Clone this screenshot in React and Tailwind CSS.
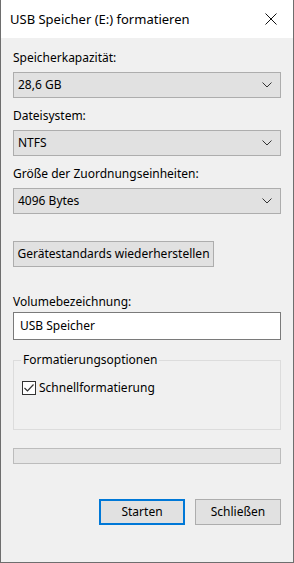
import React from "react";

function Chevron() {
  return (
    <svg width="10" height="6" viewBox="0 0 10 6" className="block">
      <path d="M0.5 0.5 L5 5 L9.5 0.5" fill="none" stroke="#333" strokeWidth="1" />
    </svg>
  );
}

function Combo({ value }) {
  return (
    <div className="h-[26px] border border-[#adadad] bg-[#e1e1e1] flex items-center justify-between pl-[4px] pr-[8px]">
      <span>{value}</span>
      <Chevron />
    </div>
  );
}

export default function App() {
  return (
    <div
      className="w-[294px] h-[563px] flex flex-col border-l border-r border-b border-[#6e6e6e] bg-[#f0f0f0] text-[12px] leading-[16px] text-black"
      style={{ fontFamily: '"Segoe UI", "Noto Sans", sans-serif' }}
    >
      <div className="h-[38px] bg-white flex items-center justify-between pl-[9px] pr-[16px]">
        <span className="text-[13px] leading-[20px] text-black">USB Speicher (E:) formatieren</span>
        <svg width="12" height="12" viewBox="0 0 12 12" className="block">
          <path d="M0.5 0.5 L11.5 11.5 M11.5 0.5 L0.5 11.5" stroke="#111" strokeWidth="1" fill="none" />
        </svg>
      </div>

      <div className="flex flex-col px-[12px] pt-[12px]">
        <div className="h-[16px]">Speicherkapazität:</div>
        <div className="mt-[6px]"><Combo value="28,6 GB" /></div>

        <div className="h-[16px] mt-[10px]">Dateisystem:</div>
        <div className="mt-[6px]"><Combo value="NTFS" /></div>

        <div className="h-[16px] mt-[10px]">Größe der Zuordnungseinheiten:</div>
        <div className="mt-[6px]"><Combo value="4096 Bytes" /></div>

        <div className="mt-[27px] flex">
          <div className="h-[26px] w-[201px] border border-[#adadad] bg-[#e1e1e1] flex items-center justify-center">
            Gerätestandards wiederherstellen
          </div>
        </div>

        <div className="h-[16px] mt-[27px]">Volumebezeichnung:</div>
        <div className="mt-[2px] h-[28px] border border-[#7a7a7a] bg-white flex items-center pl-[6px]">
          USB Speicher
        </div>

        <div className="mt-[20px] relative h-[70px] border border-[#dcdcdc]">
          <div className="absolute left-[7px] -top-[9px] px-[2px] bg-[#f0f0f0] leading-[16px]">
            Formatierungsoptionen
          </div>
          <div className="flex items-center mt-[19px] ml-[8px] gap-[3px]">
            <div className="w-[14px] h-[14px] border border-[#333] bg-white flex items-center justify-center">
              <svg width="10" height="8" viewBox="0 0 10 8" className="block">
                <path d="M0.5 4 L3.5 7 L9.5 0.5" fill="none" stroke="#333" strokeWidth="1.2" />
              </svg>
            </div>
            <span>Schnellformatierung</span>
          </div>
        </div>

        <div className="mt-[18px] h-[16px] border border-[#bcbcbc] bg-[#e6e6e6]" />

        <div className="mt-[35px] flex justify-end gap-[10px]">
          <div className="w-[86px] h-[26px] border-2 border-[#0078d7] bg-[#e1e1e1] flex items-center justify-center">
            Starten
          </div>
          <div className="w-[86px] h-[26px] border border-[#adadad] bg-[#e1e1e1] flex items-center justify-center">
            Schließen
          </div>
        </div>
      </div>
    </div>
  );
}
